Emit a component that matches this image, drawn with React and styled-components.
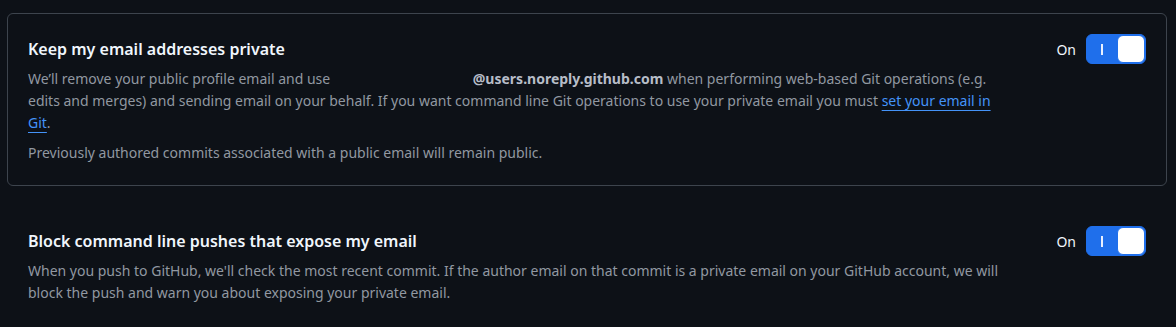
import React from "react";
import styled, { createGlobalStyle } from "styled-components";

const Global = createGlobalStyle`
  html, body { margin: 0; padding: 0; background: #0d1117; }
  body { font-family: "Noto Sans", "Open Sans", sans-serif; color: #f0f6fc; }
  * { box-sizing: border-box; }
`;

const Page = styled.div`
  padding: 13px 9px 0 7px;
  width: 1176px;
  height: 327px;
  overflow: hidden;
`;

const Section = styled.section`
  display: flex;
  align-items: flex-start;
  gap: 40px;
  padding: 20px 20px 21px;
  border: 1px solid ${(p) => (p.$bordered ? "#3d444d" : "transparent")};
  border-radius: 6px;
  margin-top: ${(p) => p.$offset || 0}px;
`;

const Content = styled.div`
  flex: 1;
  min-width: 0;
  padding-top: 3px;
`;

const Title = styled.h3`
  margin: 0 0 7px;
  font-size: 16px;
  line-height: 24px;
  font-weight: 600;
  color: #f0f6fc;
`;

const Desc = styled.p`
  margin: 0;
  font-size: 14px;
  line-height: 22px;
  color: #9198a1;
  & + & { margin-top: 8px; }
`;

const Hidden = styled.span`
  display: inline-block;
  width: 139px;
`;

const Strong = styled.strong`
  font-weight: 700;
  color: #b7bdc8;
`;

const Link = styled.a`
  color: #4493f8;
  text-decoration: underline;
  text-underline-offset: 4px;
  text-decoration-thickness: 1px;
`;

const ToggleGroup = styled.div`
  display: flex;
  align-items: center;
  gap: 10px;
  flex: none;
  padding-left: 7px;
`;

const Status = styled.span`
  font-size: 14px;
  color: #f0f6fc;
`;

const Switch = styled.button`
  position: relative;
  display: flex;
  align-items: center;
  width: 60px;
  height: 30px;
  padding: 0;
  border: 1px solid #1f6feb;
  border-radius: 6px;
  background: #1f6feb;
  cursor: pointer;
`;

const OnMark = styled.span`
  position: absolute;
  left: 14px;
  top: 9px;
  width: 1.5px;
  height: 11px;
  background: #e8f0ff;
`;

const Knob = styled.span`
  position: absolute;
  right: 0;
  top: 0;
  width: 28px;
  height: 28px;
  border-radius: 6px;
  background: #ffffff;
  border: 1px solid #1f6feb;
`;

function Toggle() {
  return (
    <ToggleGroup>
      <Status>On</Status>
      <Switch aria-pressed="true">
        <OnMark />
        <Knob />
      </Switch>
    </ToggleGroup>
  );
}

export default function App() {
  return (
    <>
      <Global />
      <Page>
        <Section $bordered>
          <Content>
            <Title>Keep my email addresses private</Title>
            <Desc>
              We’ll remove your public profile email and use <Hidden />
              <Strong>@users.noreply.github.com</Strong> when performing web-based Git operations (e.g.
              edits and merges) and sending email on your behalf. If you want command line Git operations to
              use your private email you must <Link href="#">set your email in Git</Link>.
            </Desc>
            <Desc>Previously authored commits associated with a public email will remain public.</Desc>
          </Content>
          <Toggle />
        </Section>
        <Section $offset={19}>
          <Content>
            <Title>Block command line pushes that expose my email</Title>
            <Desc>
              When you push to GitHub, we'll check the most recent commit. If the author email on that commit is
              a private email on your GitHub account, we will block the push and warn you about exposing your
              private email.
            </Desc>
          </Content>
          <Toggle />
        </Section>
      </Page>
    </>
  );
}
